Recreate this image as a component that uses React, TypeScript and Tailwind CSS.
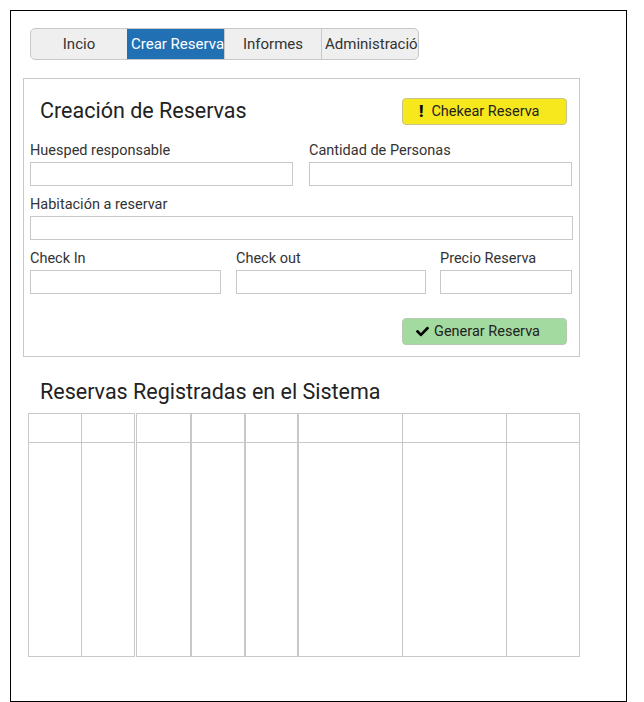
import React from "react";
import { FaCheck } from "react-icons/fa";

const font = { fontFamily: "Roboto, 'Noto Sans', sans-serif" };

function Field({ label, width }: { label: string; width: string }) {
  return (
    <div className={`flex flex-col ${width}`}>
      <div className="h-[18px] leading-[20px] text-[14.5px] text-[#333]">{label}</div>
      <div className="mt-[3px] h-[24px] border border-[#c8c8c8] bg-white" />
    </div>
  );
}

export default function App() {
  const cols = [
    { w: "w-[53px]", b: "border-l" },
    { w: "w-[54px]", b: "border-l border-r" },
    { w: "w-[54px] ml-[1px]", b: "border-l" },
    { w: "w-[54px]", b: "border-l-2" },
    { w: "w-[53px]", b: "border-l-2" },
    { w: "w-[105px]", b: "border-l-2" },
    { w: "w-[104px]", b: "border-l" },
    { w: "w-[74px]", b: "border-l border-r" },
  ];
  return (
    <div className="bg-white w-[644px] h-[702px] pl-[10px] pt-[10px]" style={font}>
      <div className="w-[617px] h-[692px] border border-black flex flex-col">
        {/* Nav tabs */}
        <div className="ml-[19px] mt-[17px] w-[389px] h-[32px] flex rounded-[5px] border border-[#c8c8c8] overflow-hidden bg-[#efefef] text-[15px] leading-[30px]">
          <div className="w-[96px] px-[4px] text-center whitespace-nowrap overflow-hidden text-[#333]">Incio</div>
          <div className="w-[97px] px-[4px] text-center whitespace-nowrap overflow-hidden bg-[#2270b4] text-white">Crear Reserva</div>
          <div className="w-[97px] px-[4px] border-l border-[#c8c8c8] text-center whitespace-nowrap overflow-hidden text-[#333]">Informes</div>
          <div className="flex-1 px-[3px] border-l border-[#c8c8c8] text-center whitespace-nowrap overflow-hidden text-[#333]">Administración</div>
        </div>

        {/* Panel */}
        <div className="ml-[12px] mt-[18px] w-[557px] h-[279px] border border-[#c8c8c8] px-[6px] flex flex-col">
          <div className="mt-[17px] h-[30px] flex items-center justify-between">
            <div className="pl-[10px] text-[21.5px] text-[#222]">Creación de Reservas</div>
            <div className="mr-[6px] w-[165px] h-[27px] rounded-[4px] border border-[#c9c38a] bg-[#f7e71d] flex items-center pl-[16px] pt-[1px] gap-[8px] text-[14.5px] text-[#222]">
              <span className="font-black text-[16px] text-black">!</span>
              <span>Chekear Reserva</span>
            </div>
          </div>
          <div className="mt-[15px] flex gap-[16px]">
            <Field label="Huesped responsable" width="w-[263px]" />
            <Field label="Cantidad de Personas" width="w-[263px]" />
          </div>
          <div className="mt-[9px] flex">
            <Field label="Habitación a reservar" width="w-[543px]" />
          </div>
          <div className="mt-[9px] flex">
            <Field label="Check In" width="w-[191px]" />
            <div className="ml-[15px]">
              <Field label="Check out" width="w-[190px]" />
            </div>
            <div className="ml-[14px]">
              <Field label="Precio Reserva" width="w-[132px]" />
            </div>
          </div>
          <div className="mt-[24px] flex justify-end">
            <div className="mr-[6px] w-[165px] h-[27px] rounded-[4px] border border-[#b5c9b3] bg-[#a3da9f] flex items-center pl-[13px] gap-[5px] text-[14.5px] text-[#222]">
              <FaCheck className="text-black text-[13px]" />
              <span>Generar Reserva</span>
            </div>
          </div>
        </div>

        {/* Registered */}
        <div className="ml-[29px] mt-[20px] h-[28px] leading-[30px] text-[21.5px] text-[#222]">
          Reservas Registradas en el Sistema
        </div>
        <div className="ml-[17px] mt-[8px] flex h-[244px]">
          {cols.map((c, i) => (
            <div key={i} className={`${c.w} ${c.b} border-[#c8c8c8] flex flex-col`}>
              <div className="h-[30px] border-t border-b border-[#c8c8c8]" />
              <div className="flex-1 border-b border-[#c8c8c8]" />
            </div>
          ))}
        </div>
      </div>
    </div>
  );
}
